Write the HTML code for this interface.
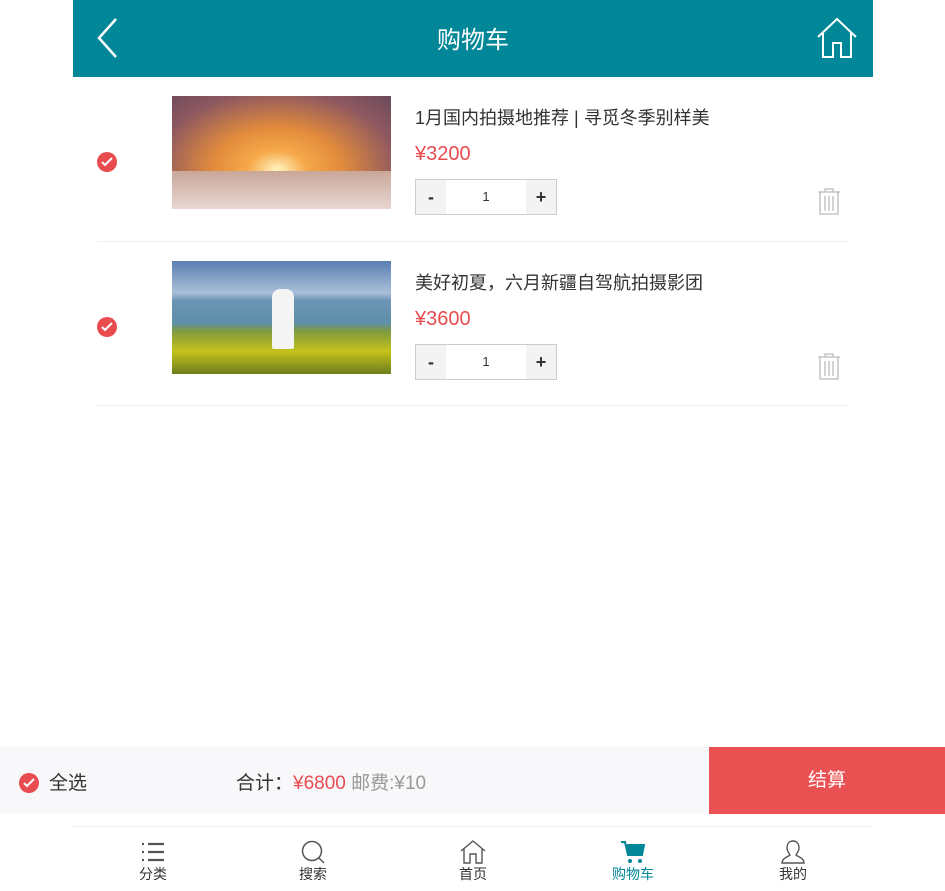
<!DOCTYPE html><html><head><meta charset="utf-8"><style>
*{margin:0;padding:0;box-sizing:border-box}
body{width:945px;height:891px;background:#fff;position:relative;font-family:"Liberation Sans","Noto Sans CJK SC",sans-serif;overflow:hidden;color:#333}
.a{position:absolute}
.hd{left:73px;top:0;width:800px;height:77px;background:#028798;color:#fff;font-size:24px;text-align:center;line-height:82px}
.chk{width:20px;height:20px;border-radius:50%;background:#e84c4f}
.chk svg{position:absolute;left:4px;top:5px}
.t{font-size:18px;color:#333}
.p{font-size:20px;color:#e84c4f}
.q{width:142px;height:36px;border:1px solid #ccc;background:#fff}
.q span{position:absolute;top:0;height:34px;line-height:34px;text-align:center;font-size:18px;font-weight:bold;width:30px;background:#f3f3f3;color:#333}
.sep{left:97px;width:752px;height:1px;background:#eee}
.tab{top:840px;width:160px;text-align:center;font-size:14px;color:#333}
.tab svg{display:block;margin:0 auto 0}
</style></head><body>
<div class="a hd">购物车
<svg class="a" style="left:22px;top:17px" width="24" height="42" viewBox="0 0 24 42"><path d="M21 2L4 21L21 40" stroke="#fff" stroke-width="2.5" fill="none"/></svg>
<svg class="a" style="left:743px;top:17px" width="42" height="42" viewBox="0 0 42 42"><path d="M2 20L21 2L40 20M7 15V40H17V26H25V40H35V15" stroke="#fff" stroke-width="2" fill="none"/></svg>
</div>

<div class="a chk" style="left:97px;top:152px"><svg width="12" height="10"><path d="M1 5l3 3 7-7" stroke="#fff" stroke-width="2" fill="none"/></svg></div>
<div class="a" style="left:172px;top:96px;width:219px;height:113px;background:radial-gradient(ellipse at 48% 65%,#fff4c0 0,#f7a94a 18%,#e28b3c 40%,#8e5860 75%,#6b4a5a 100%)"><div class="a" style="left:0;bottom:0;width:219px;height:38px;background:linear-gradient(#c9a799,#e8d6d2)"></div></div>
<div class="a t" style="left:415px;top:104px">1月国内拍摄地推荐 | 寻觅冬季别样美</div>
<div class="a p" style="left:415px;top:143px">¥3200</div>
<div class="a q" style="left:415px;top:179px"><span style="left:0">-</span><div class="a" style="left:30px;width:80px;top:0;line-height:34px;text-align:center;font-size:13px">1</div><span style="right:0">+</span></div>
<svg class="a" style="left:817px;top:187px" width="24" height="28" viewBox="0 0 24 28"><path d="M1 5H23M8 5V2H16V5M3 5V27H21V5M8 9V24M12 9V24M16 9V24" stroke="#bbb" stroke-width="1.3" fill="none"/></svg>
<div class="a sep" style="top:241px"></div>

<div class="a chk" style="left:97px;top:317px"><svg width="12" height="10"><path d="M1 5l3 3 7-7" stroke="#fff" stroke-width="2" fill="none"/></svg></div>
<div class="a" style="left:172px;top:261px;width:219px;height:113px;background:linear-gradient(#5b7fb3 0,#a9bfd8 28%,#6c95b5 35%,#5f8fa8 55%,#7f9a40 62%,#c4c21a 80%,#6c7d1c 100%)"><div class="a" style="left:100px;top:28px;width:22px;height:60px;background:#f4f4f4;border-radius:8px 8px 2px 2px"></div></div>
<div class="a t" style="left:415px;top:269px">美好初夏，六月新疆自驾航拍摄影团</div>
<div class="a p" style="left:415px;top:308px">¥3600</div>
<div class="a q" style="left:415px;top:344px"><span style="left:0">-</span><div class="a" style="left:30px;width:80px;top:0;line-height:34px;text-align:center;font-size:13px">1</div><span style="right:0">+</span></div>
<svg class="a" style="left:817px;top:352px" width="24" height="28" viewBox="0 0 24 28"><path d="M1 5H23M8 5V2H16V5M3 5V27H21V5M8 9V24M12 9V24M16 9V24" stroke="#bbb" stroke-width="1.3" fill="none"/></svg>
<div class="a sep" style="top:405px"></div>

<div class="a" style="left:0;top:747px;width:945px;height:67px;background:#f8f8fa"></div>
<div class="a chk" style="left:19px;top:773px"><svg width="12" height="10"><path d="M1 5l3 3 7-7" stroke="#fff" stroke-width="2" fill="none"/></svg></div>
<div class="a" style="left:49px;top:768px;font-size:19px">全选</div>
<div class="a" style="left:236px;top:768px;font-size:19px">合计：<span style="color:#e84c4f">¥6800</span> <span style="color:#999">邮费:¥10</span></div>
<div class="a" style="left:709px;top:747px;width:236px;height:67px;background:#ea5153;color:#fff;font-size:19px;text-align:center;line-height:67px">结算</div>
<div class="a" style="left:73px;top:826px;width:800px;height:1px;background:#eee"></div>

<div class="a tab" style="left:73px"><svg width="26" height="24"><path d="M2 4h2M2 12h2M2 20h2M8 4h16M8 12h16M8 20h16" stroke="#555" stroke-width="2.2"/></svg>分类</div>
<div class="a tab" style="left:233px"><svg width="26" height="24"><circle cx="12" cy="11" r="9.5" stroke="#555" stroke-width="1.5" fill="none"/><path d="M19 18l5 5" stroke="#555" stroke-width="1.5"/></svg>搜索</div>
<div class="a tab" style="left:393px"><svg width="26" height="24"><path d="M1 11L13 1L25 11M4 9V23H10V14H16V23H22V9" stroke="#555" stroke-width="1.4" fill="none"/></svg>首页</div>
<div class="a tab" style="left:553px;color:#028798"><svg width="26" height="24"><path d="M1 2h4l3 13h14l2-10H7" stroke="#028798" stroke-width="2" fill="#028798"/><circle cx="10" cy="21" r="2" fill="#028798"/><circle cx="20" cy="21" r="2" fill="#028798"/></svg>购物车</div>
<div class="a tab" style="left:713px"><svg width="26" height="24"><path d="M13 1c-4 0-6 3-6 7 0 3 2 5 3 7-2 2-8 3-8 8h22c0-5-6-6-8-8 1-2 3-4 3-7 0-4-2-7-6-7z" stroke="#555" stroke-width="1.4" fill="none"/></svg>我的</div>
</body></html>
